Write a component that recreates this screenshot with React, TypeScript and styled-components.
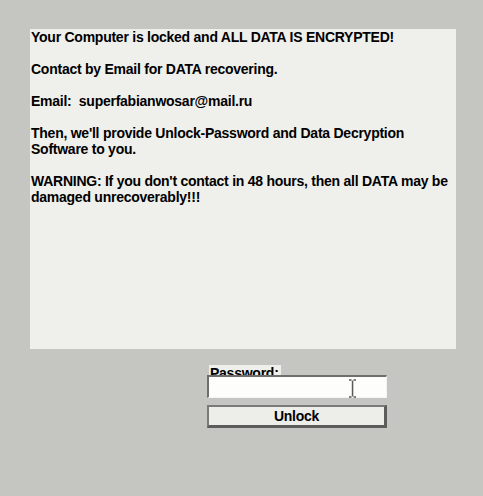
import React from 'react'
import styled, { createGlobalStyle } from 'styled-components'

const GlobalStyle = createGlobalStyle`
  html, body {
    margin: 0;
    padding: 0;
    background: #c5c5c1;
  }
  body {
    width: 483px;
    height: 496px;
    overflow: hidden;
    font-family: 'Liberation Sans', Arial, sans-serif;
  }
`

const lines = [
  'Your Computer is locked and ALL DATA IS ENCRYPTED!',
  '',
  'Contact by Email for DATA recovering.',
  '',
  'Email:  superfabianwosar@mail.ru',
  '',
  "Then, we'll provide Unlock-Password and Data Decryption",
  'Software to you.',
  '',
  "WARNING: If you don't contact in 48 hours, then all DATA may be",
  'damaged unrecoverably!!!',
]

const App = () => {
  return (
    <>
      <GlobalStyle />
      <Screen>
        <MessageBox>
          {lines.map((l, i) => (
            <Line key={i}>{l || '\u00a0'}</Line>
          ))}
        </MessageBox>
        <Form>
          <Label>Password:</Label>
          <InputWrap>
            <PasswordInput type="password" />
            <Cursor width="9" height="19" viewBox="0 0 9 19">
              <path d="M1 1h2.5M5.5 1H8M4.5 1.5v16M1 18h2.5M5.5 18H8" stroke="#5a5a58" strokeWidth="1.4" fill="none" />
              <path d="M4.5 1.5v16" stroke="#bdbdb9" strokeWidth="0.6" transform="translate(1 0)" />
            </Cursor>
          </InputWrap>
          <UnlockButton>Unlock</UnlockButton>
        </Form>
      </Screen>
    </>
  )
}

const Screen = styled.div`
  padding: 29px 0 0 30px;
`

const MessageBox = styled.div`
  width: 426px;
  height: 320px;
  box-sizing: border-box;
  background: #efefeb;
  padding: 0 0 0 1px;
  color: #000;
  font-size: 14px;
  font-weight: 700;
  letter-spacing: -0.25px;
`

const Line = styled.div`
  height: 16px;
  line-height: 16px;
  white-space: pre;
`

const Form = styled.div`
  margin: 16px 0 0 177px;
  width: 180px;
  display: flex;
  flex-direction: column;
`

const Label = styled.div`
  align-self: flex-start;
  margin-left: 2px;
  height: 10px;
  overflow: hidden;
  background: #efefeb;
  padding: 0 2px 0 1px;
  font-size: 14px;
  font-weight: 700;
  letter-spacing: -0.25px;
  line-height: 16px;
  color: #000;
`

const InputWrap = styled.div`
  position: relative;
  height: 23px;
`

const PasswordInput = styled.input`
  width: 180px;
  height: 23px;
  box-sizing: border-box;
  margin: 0;
  padding: 0 3px;
  background: #fdfdfc;
  border-style: solid;
  border-width: 2px 1px 1px 2px;
  border-color: #6e6e6c #f4f4f2 #f4f4f2 #6e6e6c;
  outline: none;
`

const Cursor = styled.svg`
  position: absolute;
  left: 141px;
  top: 4px;
`

const UnlockButton = styled.button`
  margin-top: 7px;
  width: 180px;
  height: 23px;
  box-sizing: border-box;
  padding: 0;
  background: #ededea;
  border-style: solid;
  border-width: 2px 3px 3px 2px;
  border-color: #7a7a78 #5c5c5a #5c5c5a #7a7a78;
  font-family: 'Liberation Sans', Arial, sans-serif;
  font-size: 14px;
  font-weight: 700;
  letter-spacing: -0.25px;
  color: #000;
`

export default App
